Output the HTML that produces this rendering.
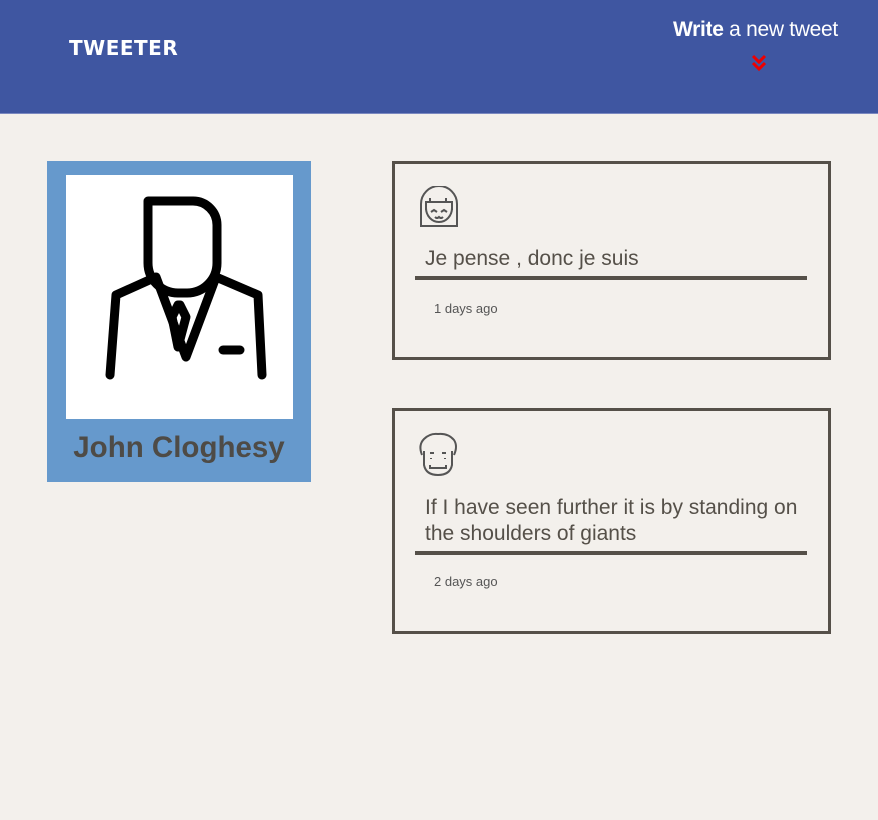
<!DOCTYPE html>
<html><head><meta charset="utf-8"><style>
body{margin:0;width:878px;height:820px;background:#f3f0ec;font-family:"Liberation Sans",sans-serif;position:relative;overflow:hidden}
.hdr{position:absolute;left:0;top:0;width:878px;height:113px;background:#3f56a1;border-bottom:1px solid #7a88c0}
.logo{position:absolute;left:69px;top:36px;color:#fff;font-weight:900;font-size:20px;letter-spacing:0.5px;font-family:"DejaVu Sans",sans-serif}
.w{position:absolute;left:673px;top:18px;color:#fff;font-size:21px;letter-spacing:-0.3px}
.prof{position:absolute;left:47px;top:161px;width:264px;height:321px;background:#6699cc}
.pic{position:absolute;left:19px;top:14px;width:227px;height:244px;background:#fff}
.name{position:absolute;left:0;width:264px;top:270px;text-align:center;color:#4e4b46;font-size:29.5px;font-weight:bold}
.card{position:absolute;left:392px;width:433px;border:3px solid #555049}
.txt{position:absolute;left:20px;width:392px;color:#555049;font-size:21px;line-height:26px;padding-left:10px;box-sizing:border-box;border-bottom:4px solid #555049;padding-bottom:4px}
.ago{position:absolute;left:39px;font-size:13px;color:#555}
</style></head><body>
<div class="hdr"><div class="logo">TWEETER</div>
<div class="w"><b>Write</b> a new tweet</div>
<svg style="position:absolute;left:751px;top:54px" width="16" height="20" viewBox="0 0 16 20"><path d="M2 2l6 6 6-6M2 9l6 6 6-6" stroke="#e00" stroke-width="3" fill="none"/></svg>
</div>
<div class="prof"><div class="pic">
<svg width="227" height="244" viewBox="0 0 227 244" fill="none" stroke="#000" stroke-width="9" stroke-linecap="round" stroke-linejoin="round">
<path d="M82 26h45a24 24 0 0 1 24 24v38a30 30 0 0 1-30 30h-9a30 30 0 0 1-30-30z"/>
<path d="M44 200l6-80 40-18 30 80 30-80 42 18 4 80"/>
<path d="M112 130l-6 12 6 30 8-30-6-12z"/>
<path d="M157 175h17"/>
</svg></div>
<div class="name">John Cloghesy</div></div>

<div class="card" style="top:161px;height:193px">
<svg style="position:absolute;left:23px;top:22px" width="42" height="46" viewBox="0 0 42 46" fill="none" stroke="#555" stroke-width="2"><path d="M3 40V18a18 18 0 0 1 36 0v22z"/><path d="M8 24v-8h26v8M12 16v-4M28 16v-4"/><path d="M8 22a13 14 0 0 0 26 0"/><path d="M13 26l3-2 3 2M23 26l3-2 3 2M17 31q2 2 4 0q2 2 4 0"/></svg>
<div class="txt" style="top:82px">Je pense , donc je suis</div>
<div class="ago" style="top:137px">1 days ago</div></div>

<div class="card" style="top:408px;height:220px">
<svg style="position:absolute;left:21px;top:20px" width="44" height="48" viewBox="0 0 44 48" fill="none" stroke="#555" stroke-width="2"><path d="M6 24q-4-10 2-16q6-6 14-5q10-1 16 6q4 6 0 15"/><path d="M8 20v14q2 10 14 10q12 0 14-10V20"/><path d="M14 22h4M26 22h4M15 27v1M29 27v1M14 34v3h16v-3"/></svg>
<div class="txt" style="top:84px">If I have seen further it is by standing on the shoulders of giants</div>
<div class="ago" style="top:163px">2 days ago</div></div>
</body></html>
